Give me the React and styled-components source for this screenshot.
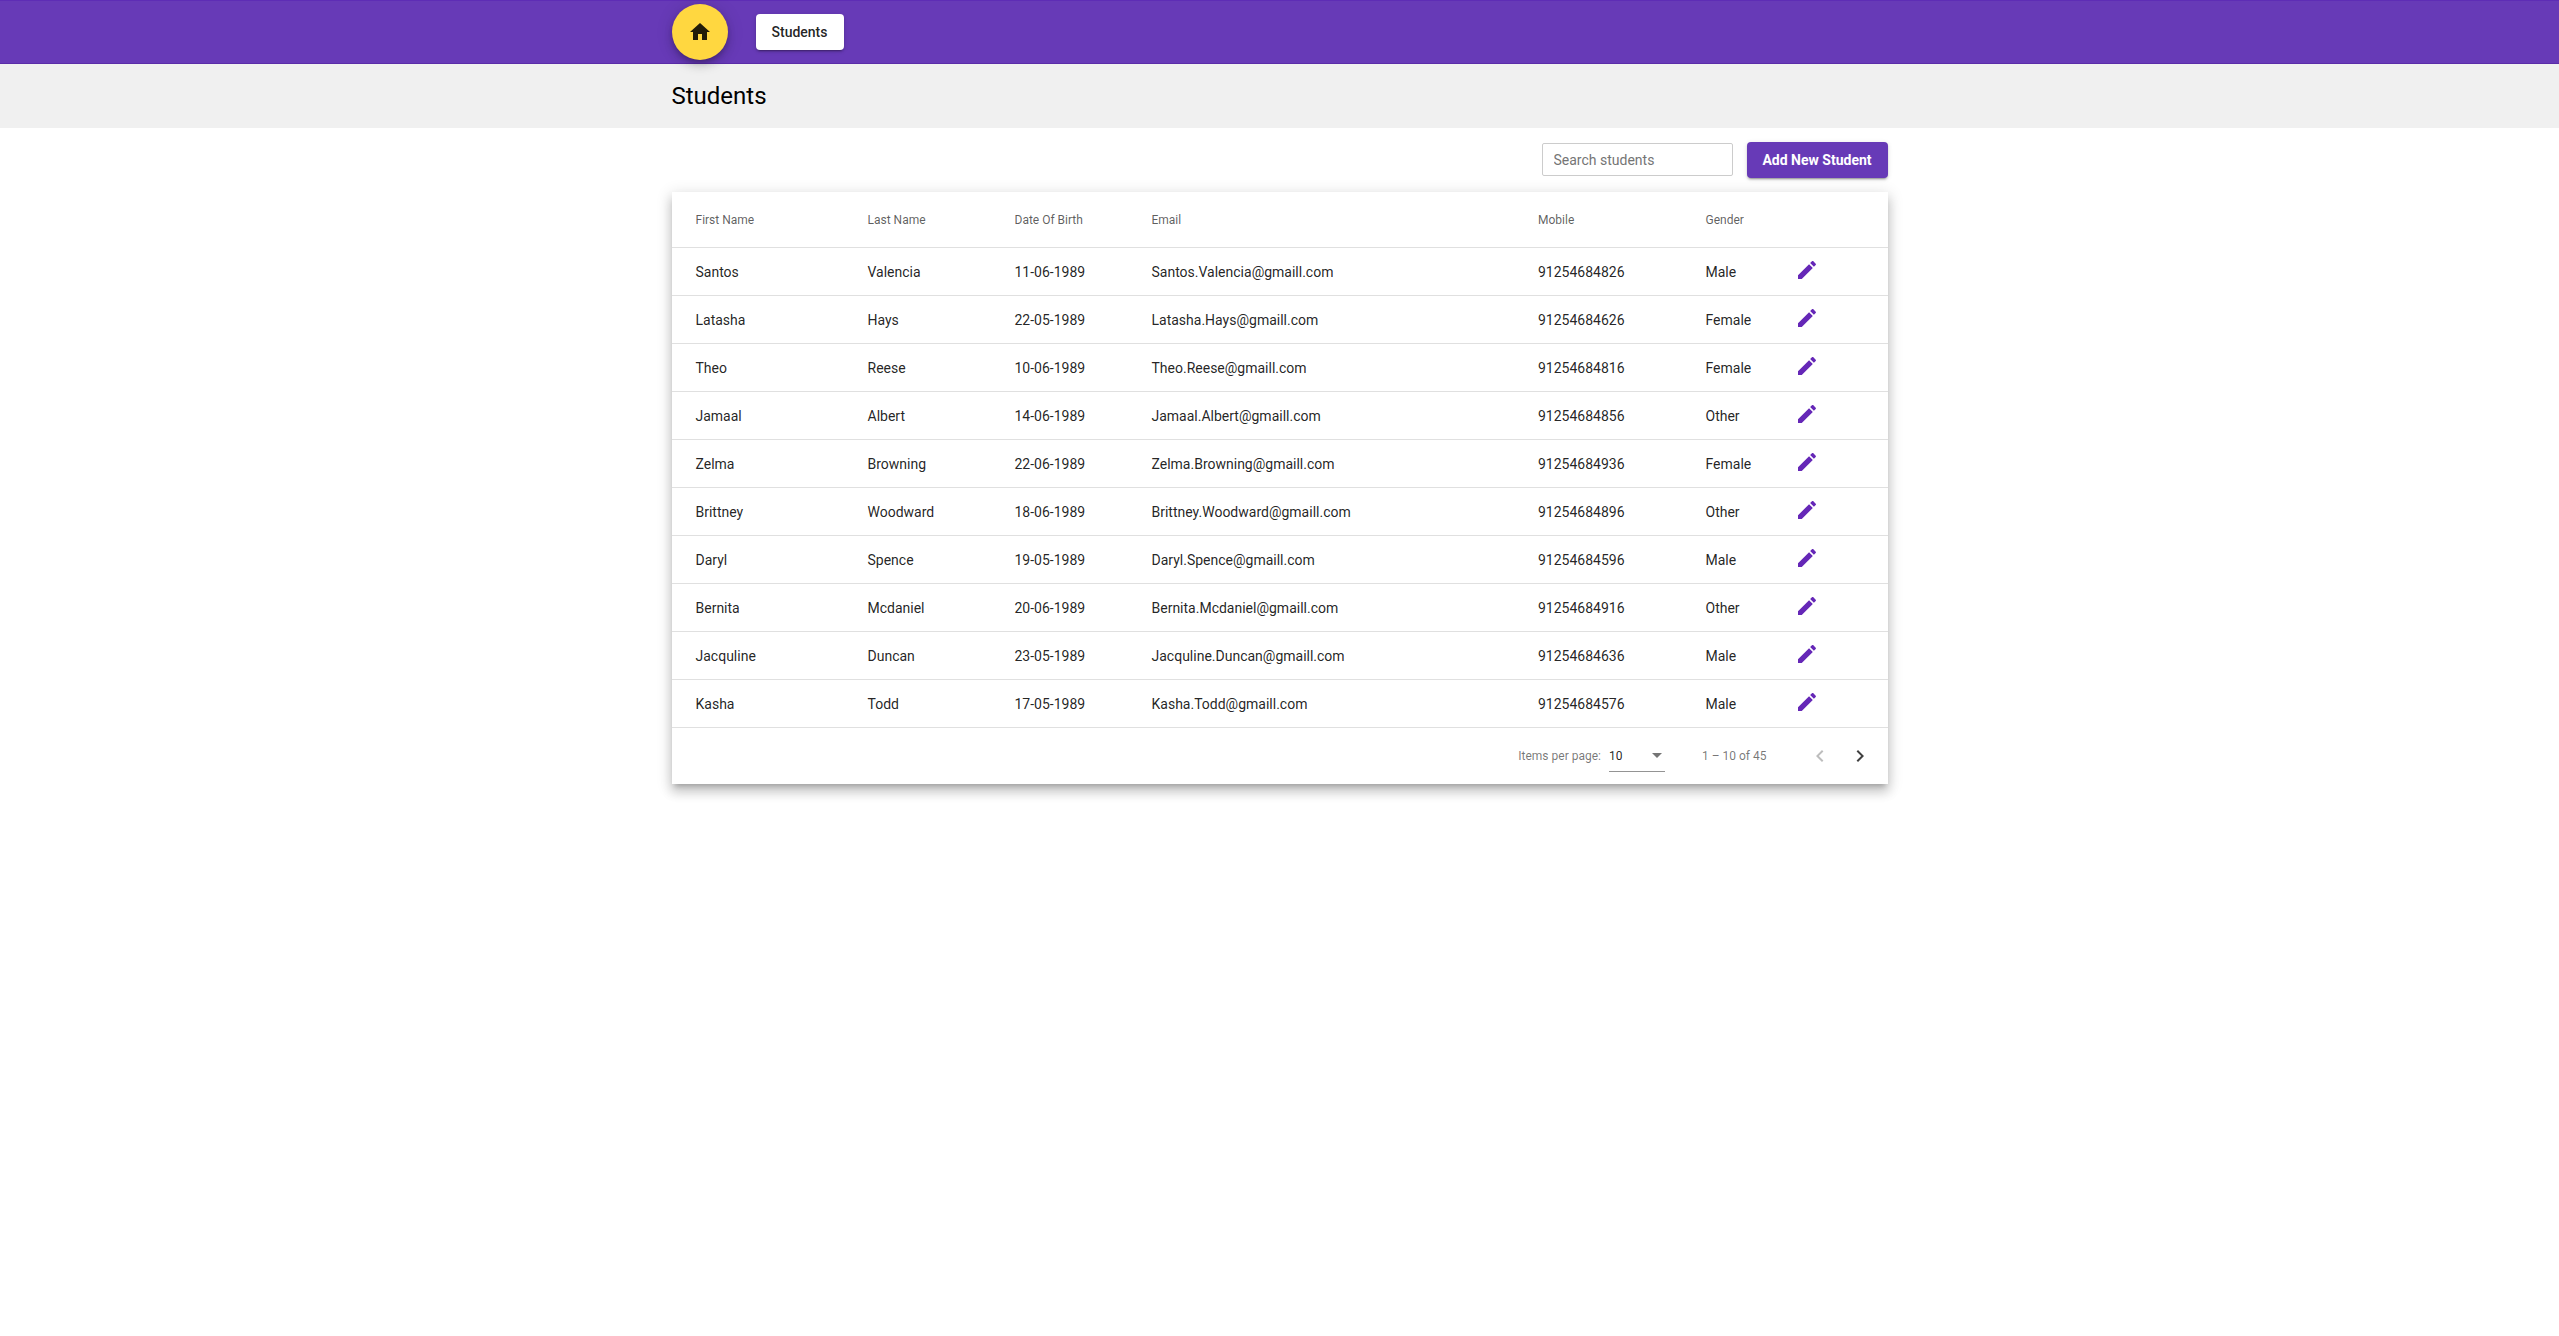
import React from 'react'
import styled, { createGlobalStyle } from 'styled-components'

const GlobalStyle = createGlobalStyle`
  html, body {
    margin: 0;
    background: #fff;
    font-family: Roboto, "Helvetica Neue", sans-serif;
    color: rgba(0, 0, 0, 0.87);
  }
`

const Page = styled.div`
  min-height: 100vh;
  background: #fff;
`

const Container = styled.div`
  width: 1216px;
  margin: 0 auto;
  display: flex;
  align-items: ${props => props.$align || 'stretch'};
  justify-content: ${props => props.$justify || 'flex-start'};
`

const Toolbar = styled.header`
  height: 64px;
  box-sizing: border-box;
  background: #673ab7;
  box-shadow: inset 0 1px 0 #5e2db5, inset 0 -1px 0 #5a2ca8;
  display: flex;
`

const HomeButton = styled.button`
  width: 56px;
  height: 56px;
  margin-top: 4px;
  border: 0;
  border-radius: 50%;
  padding: 0;
  background: #ffd740;
  color: rgba(0, 0, 0, 0.87);
  display: flex;
  align-items: center;
  justify-content: center;
  box-shadow: 0 3px 5px -1px rgba(0, 0, 0, 0.2), 0 6px 10px 0 rgba(0, 0, 0, 0.14), 0 1px 18px 0 rgba(0, 0, 0, 0.12);
`

const NavButton = styled.button`
  width: 88px;
  height: 36px;
  margin: 14px 0 0 28px;
  border: 0;
  border-radius: 4px;
  padding: 0;
  background: #fff;
  font: 500 14px/36px Roboto, sans-serif;
  color: rgba(0, 0, 0, 0.87);
  box-shadow: 0 3px 1px -2px rgba(0, 0, 0, 0.2), 0 2px 2px 0 rgba(0, 0, 0, 0.14), 0 1px 5px 0 rgba(0, 0, 0, 0.12);
`

const TitleBand = styled.div`
  height: 64px;
  background: #f0f0f0;
`

const Title = styled.h1`
  margin: 0;
  font: 400 24px/64px Roboto, sans-serif;
  color: #000;
`

const Actions = styled.div`
  height: 64px;
  display: flex;
  justify-content: flex-end;
  align-items: flex-start;
  padding-top: 14px;
  box-sizing: border-box;
`

const Search = styled.input`
  width: 191px;
  height: 33px;
  margin: 1px 14px 0 0;
  box-sizing: border-box;
  border: 1px solid #ccc;
  border-radius: 2px;
  padding: 0 11px;
  font: 400 14px Roboto, sans-serif;
  color: #333;
  outline: 0;
  &::placeholder { color: #757575; opacity: 1; }
`

const AddButton = styled.button`
  width: 141px;
  height: 36px;
  border: 0;
  border-radius: 4px;
  padding: 0;
  background: #673ab7;
  color: #fff;
  font: 700 14px/36px Roboto, sans-serif;
  box-shadow: 0 3px 1px -2px rgba(0, 0, 0, 0.2), 0 2px 2px 0 rgba(0, 0, 0, 0.14), 0 1px 5px 0 rgba(0, 0, 0, 0.12);
`

const Card = styled.section`
  width: 1216px;
  margin: 0 auto;
  background: #fff;
  box-shadow: 0 5px 5px -3px rgba(0, 0, 0, 0.2), 0 8px 10px 1px rgba(0, 0, 0, 0.14), 0 3px 14px 2px rgba(0, 0, 0, 0.12);
`

const Row = styled.div`
  display: grid;
  grid-template-columns: 172px 147px 137px 386.5px 167.5px 89px 1fr;
  height: ${props => (props.$head ? 56 : 48)}px;
  box-sizing: border-box;
  border-bottom: 1px solid #e0e0e0;
  padding-left: 24px;
  align-items: center;
`

const HeadCell = styled.div`
  font: 400 12px Roboto, sans-serif;
  color: rgba(0, 0, 0, 0.64);
`

const Cell = styled.div`
  font: 400 14px Roboto, sans-serif;
  color: rgba(0, 0, 0, 0.87);
`

const EditButton = styled.button`
  width: 24px;
  height: 24px;
  margin-top: -3px;
  border: 0;
  padding: 0;
  background: none;
  color: #6527b7;
  display: block;
`

const Pager = styled.div`
  height: 56px;
  padding-right: 8px;
  display: flex;
  align-items: center;
  justify-content: flex-end;
  font: 400 12px Roboto, sans-serif;
  color: rgba(0, 0, 0, 0.54);
`

const PageSize = styled.div`
  width: 56px;
  height: 32px;
  margin: 0 37px 0 8px;
  box-sizing: border-box;
  border-bottom: 1px solid rgba(0, 0, 0, 0.42);
  color: rgba(0, 0, 0, 0.87);
  display: flex;
  justify-content: space-between;
  align-items: center;
`

const Arrow = styled.span`
  width: 0;
  height: 0;
  margin-right: 3px;
  border-left: 5px solid transparent;
  border-right: 5px solid transparent;
  border-top: 5px solid rgba(0, 0, 0, 0.54);
`

const PageButton = styled.button`
  width: 40px;
  height: 40px;
  border: 0;
  padding: 8px;
  background: none;
  color: ${props => (props.disabled ? 'rgba(0, 0, 0, 0.26)' : 'rgba(0, 0, 0, 0.75)')};
`

const RangeLabel = styled.span`
  margin-right: 33px;
`

const Icon = ({ d }) => (
  <svg width="24" height="24" viewBox="0 0 24 24" fill="currentColor" display="block">
    <path d={d} />
  </svg>
)

const HOME = 'M10 20v-6h4v6h5v-8h3L12 3 2 12h3v8z'
const EDIT = 'M3 17.25V21h3.75L17.81 9.94l-3.75-3.75L3 17.25zM20.71 7.04c.39-.39.39-1.02 0-1.41l-2.34-2.34c-.39-.39-1.02-.39-1.41 0l-1.83 1.83 3.75 3.75 1.83-1.83z'
const PREV = 'M15.41 7.41L14 6l-6 6 6 6 1.41-1.41L10.83 12z'
const NEXT = 'M10 6L8.59 7.41 13.17 12l-4.58 4.59L10 18l6-6z'

const students = [
  ['Santos', 'Valencia', '11-06-1989', 'Santos.Valencia@gmaill.com', '91254684826', 'Male'],
  ['Latasha', 'Hays', '22-05-1989', 'Latasha.Hays@gmaill.com', '91254684626', 'Female'],
  ['Theo', 'Reese', '10-06-1989', 'Theo.Reese@gmaill.com', '91254684816', 'Female'],
  ['Jamaal', 'Albert', '14-06-1989', 'Jamaal.Albert@gmaill.com', '91254684856', 'Other'],
  ['Zelma', 'Browning', '22-06-1989', 'Zelma.Browning@gmaill.com', '91254684936', 'Female'],
  ['Brittney', 'Woodward', '18-06-1989', 'Brittney.Woodward@gmaill.com', '91254684896', 'Other'],
  ['Daryl', 'Spence', '19-05-1989', 'Daryl.Spence@gmaill.com', '91254684596', 'Male'],
  ['Bernita', 'Mcdaniel', '20-06-1989', 'Bernita.Mcdaniel@gmaill.com', '91254684916', 'Other'],
  ['Jacquline', 'Duncan', '23-05-1989', 'Jacquline.Duncan@gmaill.com', '91254684636', 'Male'],
  ['Kasha', 'Todd', '17-05-1989', 'Kasha.Todd@gmaill.com', '91254684576', 'Male'],
]

const columns = ['First Name', 'Last Name', 'Date Of Birth', 'Email', 'Mobile', 'Gender']

export default function App() {
  return (
    <Page>
      <GlobalStyle />
      <Toolbar>
        <Container>
          <HomeButton aria-label="Home"><Icon d={HOME} /></HomeButton>
          <NavButton>Students</NavButton>
        </Container>
      </Toolbar>
      <TitleBand>
        <Container>
          <Title>Students</Title>
        </Container>
      </TitleBand>
      <Container $justify="flex-end">
        <Actions>
          <Search placeholder="Search students" />
          <AddButton>Add New Student</AddButton>
        </Actions>
      </Container>
      <Card>
        <Row $head>
          {columns.map(c => <HeadCell key={c}>{c}</HeadCell>)}
          <HeadCell />
        </Row>
        {students.map(s => (
          <Row key={s[3]}>
            {s.map((v, i) => <Cell key={i}>{v}</Cell>)}
            <Cell>
              <EditButton aria-label="Edit"><Icon d={EDIT} /></EditButton>
            </Cell>
          </Row>
        ))}
        <Pager>
          <span>Items per page:</span>
          <PageSize>
            <span>10</span>
            <Arrow />
          </PageSize>
          <RangeLabel>1 – 10 of 45</RangeLabel>
          <PageButton disabled aria-label="Previous page"><Icon d={PREV} /></PageButton>
          <PageButton aria-label="Next page"><Icon d={NEXT} /></PageButton>
        </Pager>
      </Card>
    </Page>
  )
}
